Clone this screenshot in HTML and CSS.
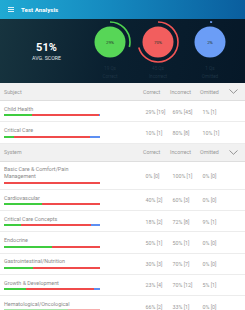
FILE: index.html
```html
<!DOCTYPE html>
<html lang="en">
<head>
    <meta charset="UTF-8">
    <title>Test Analysis</title>
    <meta name="viewport" content="width=device-width, initial-scale=1.0">
    <link rel="stylesheet" href="styles.css">
</head>
<body>
    <!-- app bar -->
    <div class="app-bar">
        <div class="menu-icon"><span></span><span></span><span></span></div>
        <div class="app-title">Test Analysis</div>
    </div>

    <!-- score summary -->
    <div class="summary">
        <div class="avg">
            <div class="avg-value">51%</div>
            <div class="avg-label">AVG. SCORE</div>
        </div>
        <div class="stat">
            <svg width="50" height="46" viewBox="0 0 50 46">
                <circle cx="25" cy="23" r="15.5" fill="#57d657"/>
                <circle class="ring" cx="25" cy="23" r="20" stroke="#4fd34f" stroke-dasharray="36.4 200"/>
                <text x="25" y="24.6">29%</text>
            </svg>
            <div class="stat-label">19 Qs<br>Correct</div>
        </div>
        <div class="stat">
            <svg width="50" height="46" viewBox="0 0 50 46">
                <circle cx="25" cy="23" r="15.5" fill="#f25e5e"/>
                <circle class="ring" cx="25" cy="23" r="20" stroke="#f25555" stroke-dasharray="88 200"/>
                <text x="25" y="24.6">70%</text>
            </svg>
            <div class="stat-label">45 Qs<br>Incorrect</div>
        </div>
        <div class="stat">
            <svg width="50" height="46" viewBox="0 0 50 46">
                <circle cx="25" cy="23" r="15.5" fill="#6b9df6"/>
                <circle class="ring" cx="25" cy="23" r="20" stroke="#6b9df6" stroke-dasharray="2.2 200"/>
                <text x="25" y="24.6">2%</text>
            </svg>
            <div class="stat-label">1 Qs<br>Omitted</div>
        </div>
    </div>

    <!-- subject table -->
    <div class="table-head">
        <div class="name-col">Subject</div>
        <div>Correct</div>
        <div>Incorrect</div>
        <div>Omitted</div>
        <div class="chevron"><svg width="9" height="5" viewBox="0 0 9 5"><path d="M0.5 0.5 L4.5 4.3 L8.5 0.5" fill="none" stroke="#8a8a8a" stroke-width="0.9"/></svg></div>
    </div>
    <div class="row">
        <div class="name-col"><div class="name">Child Health</div>
            <div class="bar"><i class="g" style="flex:29"></i><i class="r" style="flex:69"></i><i class="b" style="flex:1.5"></i></div></div>
        <div class="val">29% [19]</div><div class="val">69% [45]</div><div class="val">1% [1]</div><div></div>
    </div>
    <div class="row">
        <div class="name-col"><div class="name">Critical Care</div>
            <div class="bar"><i class="g" style="flex:10"></i><i class="r" style="flex:80"></i><i class="b" style="flex:10"></i></div></div>
        <div class="val">10% [1]</div><div class="val">80% [8]</div><div class="val">10% [1]</div><div></div>
    </div>

    <!-- system table -->
    <div class="table-head">
        <div class="name-col">System</div>
        <div>Correct</div>
        <div>Incorrect</div>
        <div>Omitted</div>
        <div class="chevron"><svg width="9" height="5" viewBox="0 0 9 5"><path d="M0.5 0.5 L4.5 4.3 L8.5 0.5" fill="none" stroke="#8a8a8a" stroke-width="0.9"/></svg></div>
    </div>
    <div class="row">
        <div class="name-col"><div class="name">Basic Care &amp; Comfort/Pain Management</div>
            <div class="bar"><i class="r" style="flex:100"></i></div></div>
        <div class="val">0% [0]</div><div class="val">100% [1]</div><div class="val">0% [0]</div><div></div>
    </div>
    <div class="row">
        <div class="name-col"><div class="name">Cardiovascular</div>
            <div class="bar"><i class="g" style="flex:40"></i><i class="r" style="flex:60"></i></div></div>
        <div class="val">40% [2]</div><div class="val">60% [3]</div><div class="val">0% [0]</div><div></div>
    </div>
    <div class="row">
        <div class="name-col"><div class="name">Critical Care Concepts</div>
            <div class="bar"><i class="g" style="flex:18"></i><i class="r" style="flex:72"></i><i class="b" style="flex:9"></i></div></div>
        <div class="val">18% [2]</div><div class="val">72% [8]</div><div class="val">9% [1]</div><div></div>
    </div>
    <div class="row">
        <div class="name-col"><div class="name">Endocrine</div>
            <div class="bar"><i class="g" style="flex:50"></i><i class="r" style="flex:50"></i></div></div>
        <div class="val">50% [1]</div><div class="val">50% [1]</div><div class="val">0% [0]</div><div></div>
    </div>
    <div class="row">
        <div class="name-col"><div class="name">Gastrointestinal/Nutrition</div>
            <div class="bar"><i class="g" style="flex:30"></i><i class="r" style="flex:70"></i></div></div>
        <div class="val">30% [3]</div><div class="val">70% [7]</div><div class="val">0% [0]</div><div></div>
    </div>
    <div class="row">
        <div class="name-col"><div class="name">Growth &amp; Development</div>
            <div class="bar"><i class="g" style="flex:23"></i><i class="r" style="flex:70"></i><i class="b" style="flex:6"></i></div></div>
        <div class="val">23% [4]</div><div class="val">70% [12]</div><div class="val">5% [1]</div><div></div>
    </div>
    <div class="row faded">
        <div class="name-col"><div class="name">Hematological/Oncological</div>
            <div class="bar"><i class="g" style="flex:66"></i><i class="r" style="flex:33"></i></div></div>
        <div class="val">66% [2]</div><div class="val">33% [1]</div><div class="val">0% [0]</div><div></div>
    </div>
</body>
</html>
```

FILE: styles.css
```css
* {
    box-sizing: border-box;
}

body {
    margin: 0;
    width: 245px;
    overflow: hidden;
    font-family: Roboto, 'Liberation Sans', sans-serif;
    background: #fff;
    color: #8a8a8a;
}

/* app bar */
.app-bar {
    height: 19px;
    display: flex;
    align-items: center;
    padding-left: 8px;
    background: linear-gradient(90deg, #20aad4, #1589bf 45%, #0a5e9e);
}

.menu-icon {
    width: 6px;
    display: flex;
    flex-direction: column;
    gap: 1.2px;
    margin-right: 7px;
}

.menu-icon span {
    height: 0.9px;
    background: #d8f0fa;
}

.app-title {
    color: #fff;
    font-size: 6.2px;
    font-weight: bold;
}

/* summary */
.summary {
    height: 64px;
    display: grid;
    grid-template-columns: 85px 50px 46px 58px;
    background: linear-gradient(100deg, #17343f, #0a2030 45%, #061828);
}

.avg {
    padding-left: 8px;
    padding-top: 1px;
    display: flex;
    flex-direction: column;
    align-items: center;
    justify-content: center;
    color: #fff;
}

.avg-value {
    font-size: 11px;
    font-weight: bold;
    line-height: 11px;
}

.avg-label {
    font-size: 5.2px;
    color: #e0e6ea;
    margin-top: 2px;
}

.stat {
    display: flex;
    flex-direction: column;
    align-items: center;
}

.stat svg {
    display: block;
}

.ring {
    fill: none;
    stroke-width: 1.6;
    transform: rotate(-90deg);
    transform-origin: 25px 23px;
}

.stat text {
    font-size: 4.4px;
    fill: #2b3a2e;
    text-anchor: middle;
}

.stat-label {
    font-size: 4.6px;
    line-height: 8px;
    text-align: center;
    color: #1e3445;
}

/* tables */
.table-head,
.row {
    display: grid;
    grid-template-columns: 143px 27px 30px 22px 23px;
    border-bottom: 1px solid #ececec;
}

.table-head {
    height: 18px;
    align-items: center;
    background: #f1f1f1;
    border-bottom-color: #dedede;
    font-size: 5.3px;
    color: #999;
}

.table-head .name-col {
    padding-left: 4px;
}

.chevron {
    display: flex;
    padding-left: 7px;
}

.row {
    align-items: center;
    background: #fff;
}

.row .name-col {
    padding: 4.75px 0 5px 4px;
}

.name {
    font-size: 5.4px;
    line-height: 7px;
    max-width: 94px;
    color: #8a8a8a;
}

.bar {
    display: flex;
    width: 96px;
    height: 2px;
    margin-top: 1.5px;
}

.bar i {
    display: block;
}

.bar .g { background: #3fcc3f; }
.bar .r { background: #f04b4b; }
.bar .b { background: #5d8ff2; }

.val {
    font-size: 5.3px;
    padding-left: 2.5px;
    padding-top: 1px;
    color: #999;
    white-space: nowrap;
}

.faded .bar {
    opacity: 0.45;
}
```
